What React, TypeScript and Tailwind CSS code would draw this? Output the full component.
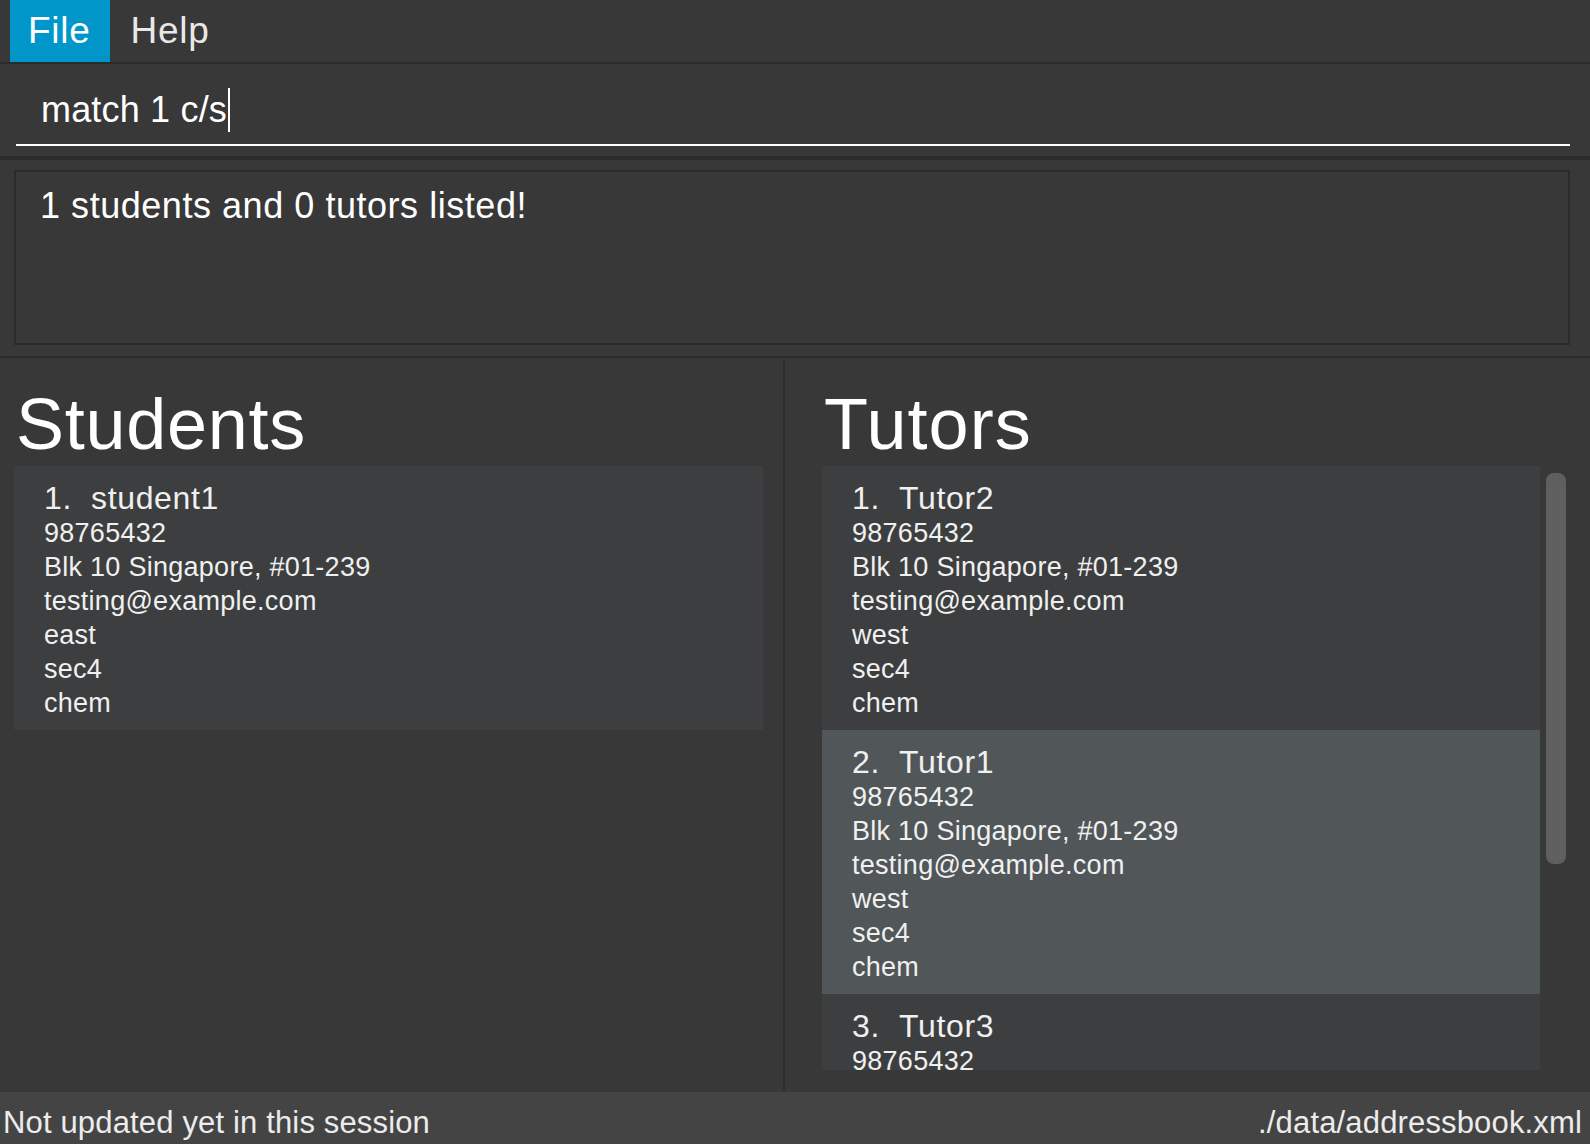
import React from 'react';

type Person = {
  name: string;
  phone: string;
  address: string;
  email: string;
  region: string;
  level: string;
  subject: string;
};

const students: Person[] = [
  {
    name: 'student1',
    phone: '98765432',
    address: 'Blk 10 Singapore, #01-239',
    email: 'testing@example.com',
    region: 'east',
    level: 'sec4',
    subject: 'chem',
  },
];

const tutors: Person[] = [
  {
    name: 'Tutor2',
    phone: '98765432',
    address: 'Blk 10 Singapore, #01-239',
    email: 'testing@example.com',
    region: 'west',
    level: 'sec4',
    subject: 'chem',
  },
  {
    name: 'Tutor1',
    phone: '98765432',
    address: 'Blk 10 Singapore, #01-239',
    email: 'testing@example.com',
    region: 'west',
    level: 'sec4',
    subject: 'chem',
  },
  {
    name: 'Tutor3',
    phone: '98765432',
    address: 'Blk 10 Singapore, #01-239',
    email: 'testing@example.com',
    region: 'west',
    level: 'sec4',
    subject: 'chem',
  },
];

const PersonCard: React.FC<{ person: Person; index: number }> = ({ person, index }) => {
  // even rows are the darker cell, odd rows the lighter one
  const bg = index % 2 === 0 ? 'bg-[#3c3e3f]' : 'bg-[#515658]';
  return (
    <div className={`${bg} shrink-0 pl-[30px] pt-[14px] pb-[10px] text-[#f0f0f0]`}>
      <div className="text-[32px] leading-[36px] tracking-[0.02em]">
        {index + 1}.&nbsp;&nbsp;{person.name}
      </div>
      <div className="text-[27px] leading-[34px] tracking-[0.01em]">
        <div>{person.phone}</div>
        <div>{person.address}</div>
        <div>{person.email}</div>
        <div>{person.region}</div>
        <div>{person.level}</div>
        <div>{person.subject}</div>
      </div>
    </div>
  );
};

export default function App() {
  return (
    <div
      className="h-[1144px] w-full flex flex-col bg-[#383838] text-white overflow-hidden"
      style={{ fontFamily: '"Liberation Sans", Arial, sans-serif' }}
    >
      {/* menu bar */}
      <div className="h-[62px] shrink-0 flex pl-[10px] text-[37px] tracking-[0.02em]">
        <div className="pl-[18px] pr-[19px] bg-[#0096c9] flex items-center">File</div>
        <div className="px-[21px] flex items-center text-[#e8e8e8]">Help</div>
      </div>
      <div className="h-[2px] shrink-0 bg-[#2b2b2b]" />

      {/* command box */}
      <div className="h-[92px] shrink-0 pl-[16px] pr-[20px]">
        <div className="pt-[24px] pb-[12px] pl-[25px] border-b-2 border-white flex items-center">
          <span className="text-[36px] leading-[44px] tracking-[0.005em]">match 1 c/s</span>
          <span className="w-[2px] h-[44px] bg-white ml-[1px]" />
        </div>
      </div>
      <div className="h-[4px] shrink-0 bg-[#2b2b2b]" />

      {/* result display */}
      <div className="h-[196px] shrink-0 pt-[10px] pb-[11px] pl-[14px] pr-[20px]">
        <div className="h-full border-2 border-[#2b2b2b] pt-[12px] pl-[24px]">
          <div className="text-[36px] leading-[44px] tracking-[0.015em]">1 students and 0 tutors listed!</div>
        </div>
      </div>
      <div className="h-[2px] shrink-0 bg-[#2b2b2b]" />

      {/* lists */}
      <div className="flex-1 flex min-h-0">
        <div className="w-[783px] shrink-0 flex flex-col pl-[14px] pr-[20px] pt-[30px] pb-[22px]">
          <div className="text-[72px] leading-[72px] pl-[2px] mb-[6px] tracking-[0.01em]">Students</div>
          <div className="flex-1 min-h-0 flex flex-col overflow-hidden">
            {students.map((s, i) => (
              <PersonCard key={s.name} person={s} index={i} />
            ))}
          </div>
        </div>

        <div className="w-[2px] shrink-0 bg-[#2b2b2b] mt-[2px] mb-[2px]" />

        <div className="flex-1 flex flex-col pl-[37px] pt-[30px] pb-[22px]">
          <div className="text-[72px] leading-[72px] pl-[2px] mb-[6px] tracking-[0.015em]">Tutors</div>
          <div className="flex-1 min-h-0 flex">
            <div className="w-[718px] flex flex-col overflow-hidden">
              {tutors.map((t, i) => (
                <PersonCard key={t.name} person={t} index={i} />
              ))}
            </div>
            <div className="pl-[6px] pt-[7px]">
              <div className="w-[20px] h-[391px] rounded-[8px] bg-[#5f5f5f]" />
            </div>
          </div>
        </div>
      </div>

      {/* status bar */}
      <div className="h-[52px] shrink-0 bg-[#444444] flex justify-between pt-[13px] pl-[3px] pr-[8px] text-[31px] leading-[36px] tracking-[0.005em] text-[#ececec] overflow-hidden">
        <span>Not updated yet in this session</span>
        <span>./data/addressbook.xml</span>
      </div>
    </div>
  );
}
